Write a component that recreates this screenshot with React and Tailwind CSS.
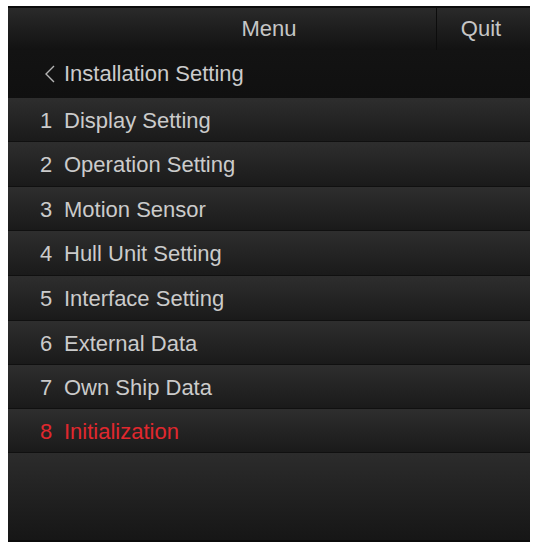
const items = [
  { n: "1", label: "Display Setting", h: "h-[44px]" },
  { n: "2", label: "Operation Setting", h: "h-[45px]" },
  { n: "3", label: "Motion Sensor", h: "h-[44px]" },
  { n: "4", label: "Hull Unit Setting", h: "h-[45px]" },
  { n: "5", label: "Interface Setting", h: "h-[45px]" },
  { n: "6", label: "External Data", h: "h-[44px]" },
  { n: "7", label: "Own Ship Data", h: "h-[44px]" },
  { n: "8", label: "Initialization", h: "h-[44px]", active: true },
];

function MenuRow({ item }) {
  return (
    <div
      className={`${item.h} flex items-center pt-[2px] border-t border-[#101010] bg-gradient-to-b from-[#2e2e2e] to-[#1a1a1a] ${
        item.active ? "text-[#e0282e]" : "text-[#cbcbcb]"
      }`}
    >
      <span className="w-[24px] ml-[32px]">{item.n}</span>
      <span>{item.label}</span>
    </div>
  );
}

export default function App() {
  return (
    <div
      className="w-[539px] h-[550px] bg-white pt-[6px] pl-[8px]"
      style={{ fontFamily: '"Liberation Sans", Arial, sans-serif' }}
    >
      <div className="w-[522px] h-[536px] flex flex-col bg-[#181818] border-t-2 border-b-2 border-[#0b0b0b] text-[22px] leading-none">
        <div className="h-[42px] grid grid-cols-[94px_1fr_94px] bg-gradient-to-b from-[#2a2a2a] to-[#121212] text-[#c6c6c6]">
          <div />
          <div className="flex items-center justify-center">Menu</div>
          <div className="flex items-center justify-center border-l border-[#0c0c0c] pr-[5px]">
            Quit
          </div>
        </div>
        <div className="h-[47px] flex items-center bg-gradient-to-b from-[#131313] to-[#101010] text-[#cbcbcb]">
          <svg width="12" height="18" viewBox="0 0 12 18" className="ml-[36px]">
            <path d="M10 1 L2 9 L10 17" fill="none" stroke="#b5b5b5" strokeWidth="1.4" />
          </svg>
          <span className="ml-[8px]">Installation Setting</span>
        </div>
        {items.map((item) => (
          <MenuRow key={item.n} item={item} />
        ))}
        <div className="flex-1 border-t border-[#101010] bg-gradient-to-b from-[#2c2c2c] to-[#161616]" />
      </div>
    </div>
  );
}
